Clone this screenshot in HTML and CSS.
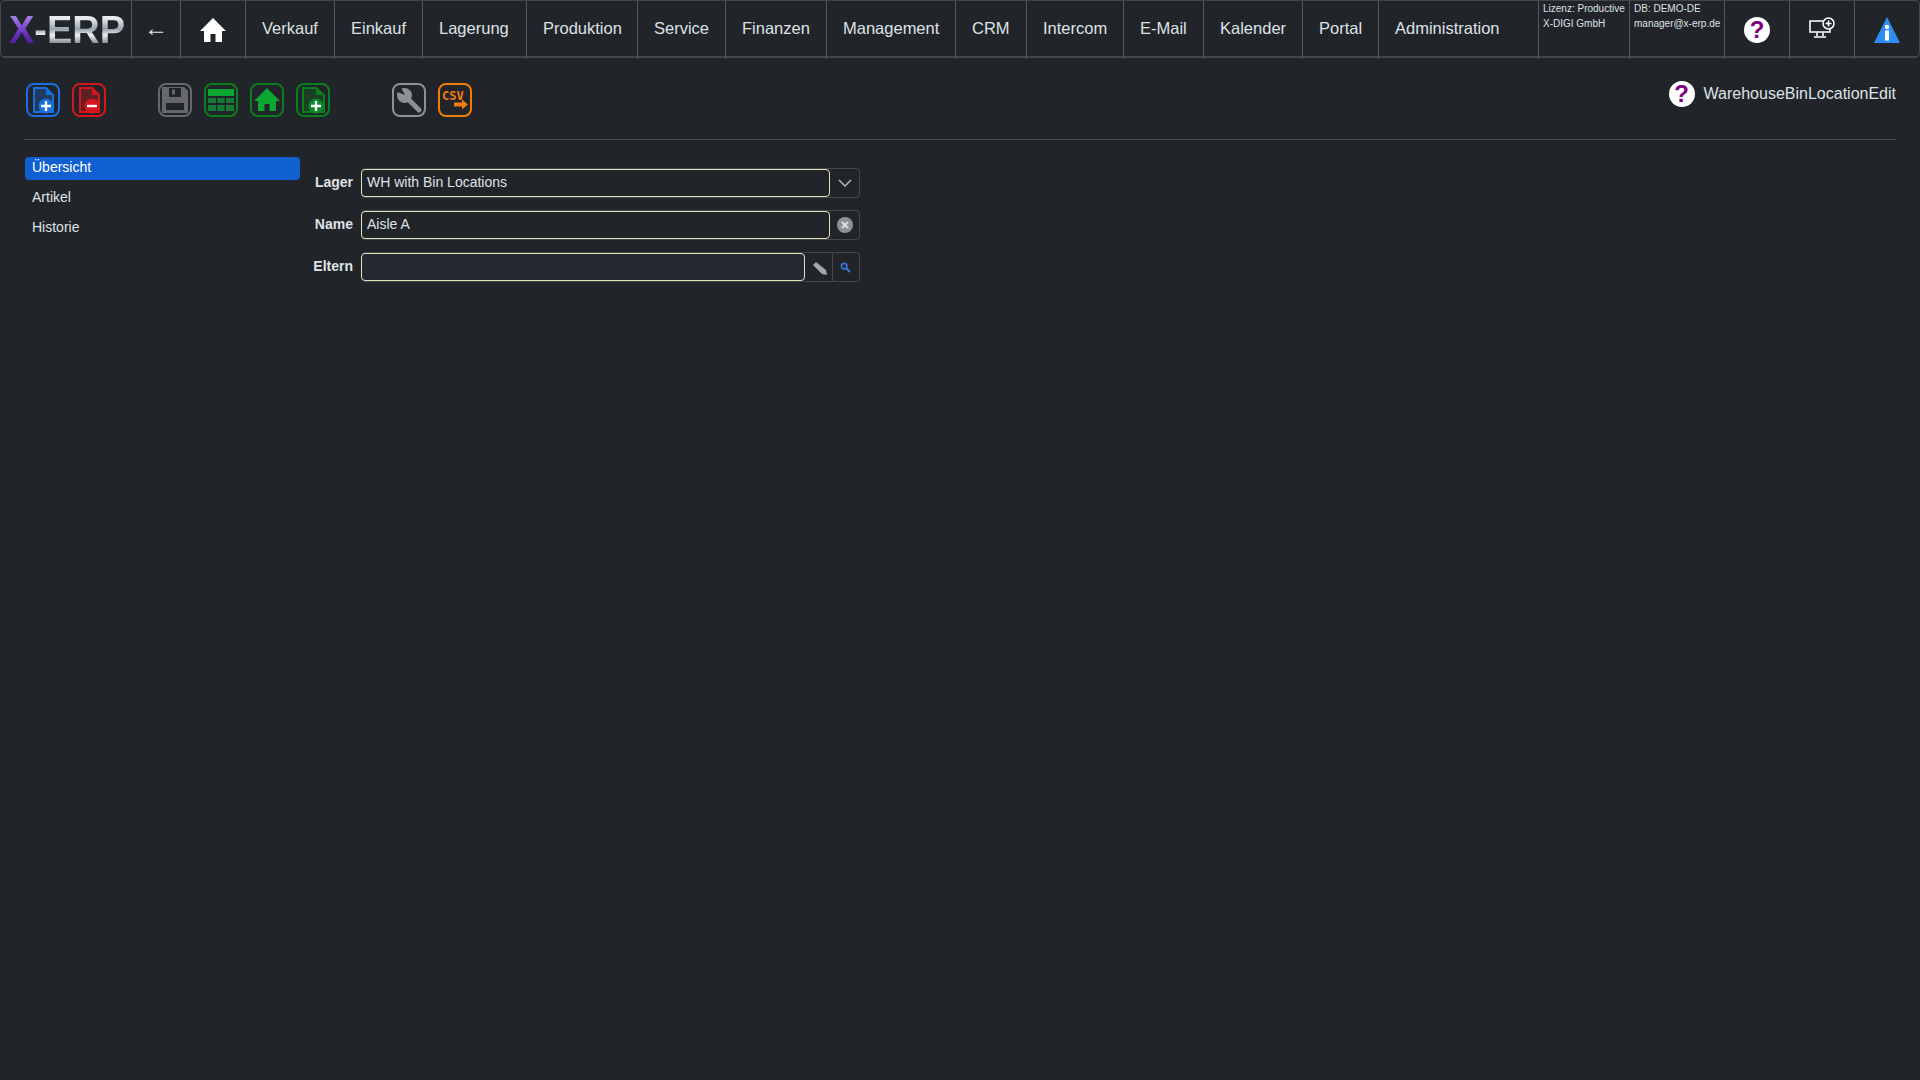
FILE: index.html
```html
<!DOCTYPE html>
<html lang="de">
<head>
<meta charset="utf-8">
<title>X-ERP</title>
<link rel="stylesheet" href="styles.css">
</head>
<body>
<header class="topbar">
  <div class="logo"><span class="logo-x">X</span><span class="logo-rest">-ERP</span></div>
  <div class="cell nav-item nav-arrow">←</div>
  <div class="cell icon-cell">
    <svg class="home-icon" viewBox="0 0 26 24"><path fill="#fff" d="M13 0 L26 13 H22 V24 H15.500 V16 H10.500 V24 H4 V13 H0 Z"/></svg>
  </div>
  <div class="cell nav-item">Verkauf</div>
  <div class="cell nav-item">Einkauf</div>
  <div class="cell nav-item">Lagerung</div>
  <div class="cell nav-item">Produktion</div>
  <div class="cell nav-item">Service</div>
  <div class="cell nav-item">Finanzen</div>
  <div class="cell nav-item">Management</div>
  <div class="cell nav-item">CRM</div>
  <div class="cell nav-item">Intercom</div>
  <div class="cell nav-item">E-Mail</div>
  <div class="cell nav-item">Kalender</div>
  <div class="cell nav-item">Portal</div>
  <div class="cell nav-item">Administration</div>
  <div class="cell info-cell"><div>Lizenz: Productive</div><div>X-DIGI GmbH</div></div>
  <div class="cell info-cell"><div>DB: DEMO-DE</div><div>manager@x-erp.de</div></div>
  <div class="cell icon-cell"><span class="help-badge">?</span></div>
  <div class="cell icon-cell">
    <svg class="monitor-icon" viewBox="0 0 26 22" fill="none" stroke="#fff">
      <path stroke-width="1.600" d="M14 4 H1 V15 H21 V11"/>
      <path stroke-width="1.600" d="M8 15.500 V19 M14 15.500 V19 M5 20 H17"/>
      <circle cx="19.500" cy="6.500" r="5.500" stroke-width="1.500" fill="#212529"/>
      <path stroke-width="1.600" d="M19.500 3.500 V9.500 M16.500 6.500 H22.500"/>
    </svg>
  </div>
  <div class="cell icon-cell">
    <svg class="info-icon" viewBox="0 0 26 26"><path fill="#2f8cf0" d="M13 0 L26 26 H0 Z"/><circle cx="13" cy="10" r="2.200" fill="#fff"/><rect x="11" y="13.500" width="4" height="10" fill="#fff"/></svg>
  </div>
</header>

<section class="toolbar">
  <div class="tool-group">
    <svg class="tool tool-blue" viewBox="0 0 34 34">
      <rect x="1" y="1" width="32" height="32" rx="7" fill="none" stroke="currentColor" stroke-width="2"/>
      <path fill="currentColor" fill-opacity=".3" stroke="currentColor" stroke-width="2" d="M8 5 H20 L27 12 V29 H8 Z"/>
      <path fill="currentColor" d="M20 4 L28 12 H20 Z"/>
      <circle cx="20" cy="23" r="7.500" fill="currentColor"/>
      <path stroke="#fff" stroke-width="2.400" d="M20 18 V28 M15 23 H25"/>
    </svg>
    <svg class="tool tool-red" viewBox="0 0 34 34">
      <rect x="1" y="1" width="32" height="32" rx="7" fill="none" stroke="currentColor" stroke-width="2"/>
      <path fill="currentColor" fill-opacity=".35" stroke="currentColor" stroke-width="2" d="M8 5 H20 L27 12 V29 H8 Z"/>
      <path fill="currentColor" d="M20 4 L28 12 H20 Z"/>
      <circle cx="20" cy="23" r="7.500" fill="currentColor"/>
      <path stroke="#fff" stroke-width="2.400" d="M15 23 H25"/>
    </svg>
  </div>
  <div class="tool-group tool-group-save">
    <svg class="tool tool-grey" viewBox="0 0 34 34">
      <rect x="1" y="1" width="32" height="32" rx="7" fill="none" stroke="currentColor" stroke-width="2"/>
      <path fill="currentColor" fill-rule="evenodd" d="M4 4 H26 L30 8 V30 H4 Z M11 5 V14 H23 V5 Z M8 19 V27 H26 V19 Z"/>
      <rect x="14" y="6.500" width="3" height="5" fill="currentColor"/>
      <rect x="8" y="18" width="18" height="2" fill="currentColor"/>
    </svg>
    <svg class="tool tool-green" viewBox="0 0 34 34">
      <rect x="1" y="1" width="32" height="32" rx="7" fill="none" stroke="currentColor" stroke-width="2"/>
      <rect x="4" y="6" width="26" height="7" fill="#0aa733"/>
      <g fill="#157a36">
        <rect x="4" y="15" width="8" height="5"/><rect x="13.500" y="15" width="7" height="5"/><rect x="22" y="15" width="8" height="5"/>
        <rect x="4" y="22" width="8" height="6"/><rect x="13.500" y="22" width="7" height="6"/><rect x="22" y="22" width="8" height="6"/>
      </g>
    </svg>
    <svg class="tool tool-green" viewBox="0 0 34 34">
      <rect x="1" y="1" width="32" height="32" rx="7" fill="none" stroke="currentColor" stroke-width="2"/>
      <path fill="#0aa733" d="M17 5 L30 18 H26 V28 H19.500 V21 H14.500 V28 H8 V18 H4 Z"/>
    </svg>
    <svg class="tool tool-green" viewBox="0 0 34 34">
      <rect x="1" y="1" width="32" height="32" rx="7" fill="none" stroke="currentColor" stroke-width="2"/>
      <path fill="currentColor" fill-opacity=".3" stroke="currentColor" stroke-width="2" d="M7 5 H20 L28 12 V29 H7 Z"/>
      <path fill="currentColor" d="M20 4 L28 12 H20 Z"/>
      <circle cx="20" cy="23" r="7.500" fill="#0a8a2a"/>
      <path stroke="#fff" stroke-width="2.400" d="M20 18 V28 M15 23 H25"/>
    </svg>
  </div>
  <div class="tool-group tool-group-extra">
    <svg class="tool tool-silver" viewBox="0 0 34 34">
      <rect x="1" y="1" width="32" height="32" rx="7" fill="none" stroke="currentColor" stroke-width="2"/>
      <circle cx="12.500" cy="12.500" r="7.500" fill="currentColor"/>
      <path stroke="currentColor" stroke-width="5" stroke-linecap="round" d="M14 14 L27 27"/>
      <path fill="#212529" d="M13 12 L8 3 L3 8 Z"/>
    </svg>
    <svg class="tool tool-orange" viewBox="0 0 34 34">
      <rect x="1" y="1" width="32" height="32" rx="7" fill="none" stroke="currentColor" stroke-width="2"/>
      <text class="csv-label" x="4" y="17">CSV</text>
      <path fill="currentColor" d="M16 19.500 H24 V16.500 L30 21.500 L24 26.500 V23.500 H16 Z"/>
    </svg>
  </div>
  <div class="page-title"><span class="help-badge">?</span><span>WarehouseBinLocationEdit</span></div>
</section>

<div class="divider"></div>

<main class="content">
  <nav class="side-menu">
    <div class="side-item side-item-active">Übersicht</div>
    <div class="side-item">Artikel</div>
    <div class="side-item">Historie</div>
  </nav>
  <form class="edit-form">
    <div class="form-row">
      <label class="form-label">Lager</label>
      <div class="field">
        <div class="field-input">WH with Bin Locations</div>
        <div class="addon addon-narrow">
          <svg class="chevron" viewBox="0 0 14 8" fill="none" stroke="#aeb2b6" stroke-width="1.600"><path d="M1 1 L7 7 L13 1"/></svg>
        </div>
      </div>
    </div>
    <div class="form-row">
      <label class="form-label">Name</label>
      <div class="field">
        <div class="field-input">Aisle A</div>
        <div class="addon addon-narrow">
          <svg class="clear-icon" viewBox="0 0 16 16"><circle cx="8" cy="8" r="8" fill="#8e9195"/><path stroke="#dcdcdc" stroke-width="2.200" d="M5 5 L11 11 M11 5 L5 11"/></svg>
        </div>
      </div>
    </div>
    <div class="form-row">
      <label class="form-label">Eltern</label>
      <div class="field">
        <div class="field-input field-input-empty"></div>
        <div class="addon addon-plain">
          <svg class="pencil-icon" viewBox="0 0 14 14"><path fill="#a3a6a9" d="M0 4 L3 1 L13 9 L14 14 L9 13 Z"/></svg>
        </div>
        <div class="addon addon-search">
          <svg class="search-icon" viewBox="0 0 12 12" fill="none" stroke="#3f72e0"><circle cx="4.500" cy="4.500" r="3" stroke-width="1.800"/><path stroke-width="2.400" d="M7 7 L11 11"/></svg>
        </div>
      </div>
    </div>
  </form>
</main>
</body>
</html>
```
FILE: styles.css
```css
* {
  box-sizing: border-box;
}

html,
body {
  height: 100%;
}

body {
  margin: 0;
  background: #212529;
  color: #dee2e6;
  font-family: "Liberation Sans", Arial, sans-serif;
  font-size: 14px;
}

.topbar {
  display: grid;
  grid-template-columns: 130px 49px 65px 89px 88px 104px 111px 88px 101px 129px 71px 97px 80px 99px 76px 160px 91px 95px 65px 65px 1fr;
  height: 58px;
  border: 1px solid #43474b;
  border-width: 1px 1px 2px 1px;
  border-radius: 5px;
}

.logo {
  padding-left: 8px;
  font-size: 38px;
  font-weight: 700;
  line-height: 58px;
  white-space: nowrap;
}

.logo-x {
  background: linear-gradient(180deg, #a27ae6 20%, #6a35c0 55%, #4f22a0 80%);
  -webkit-background-clip: text;
  background-clip: text;
  color: transparent;
}

.logo-rest {
  background: linear-gradient(180deg, #e8ecee 22%, #96a2aa 48%, #f0f2f4 62%, #8d959b 80%);
  -webkit-background-clip: text;
  background-clip: text;
  color: transparent;
}

.cell {
  display: flex;
  align-items: center;
  border-left: 1px solid #54585c;
}

.nav-item {
  padding: 0 0 4px 16px;
  font-size: 16.500px;
  white-space: nowrap;
}

.nav-arrow {
  font-size: 24px;
  padding: 0 0 5px 12px;
}

.icon-cell {
  justify-content: center;
}

.home-icon {
  width: 26px;
  height: 24px;
}

.info-cell {
  display: block;
  padding: 0 0 0 4px;
  font-size: 10px;
  line-height: 15px;
  white-space: nowrap;
}

.monitor-icon {
  width: 26px;
  height: 22px;
  margin-bottom: 5px;
}

.info-icon {
  width: 26px;
  height: 26px;
}

.help-badge {
  display: flex;
  align-items: center;
  justify-content: center;
  flex: none;
  width: 26px;
  height: 26px;
  border-radius: 50%;
  background: #fff;
  color: #800080;
  font-size: 24px;
  font-weight: 700;
}

.toolbar {
  display: flex;
  align-items: flex-start;
  padding: 25px 24px 0 26px;
  height: 81px;
}

.tool-group {
  display: flex;
  gap: 12px;
}

.tool-group-save {
  margin-left: 52px;
}

.tool-group-extra {
  margin-left: 62px;
}

.tool {
  display: block;
  width: 34px;
  height: 34px;
}

.tool-blue {
  color: #1a6fe0;
}

.tool-red {
  color: #d8151b;
}

.tool-grey {
  color: #66686b;
}

.tool-green {
  color: #0b7f1f;
}

.tool-silver {
  color: #8d9195;
}

.tool-orange {
  color: #f07c0c;
}

.csv-label {
  fill: currentColor;
  font-family: "DejaVu Sans Mono", monospace;
  font-size: 12px;
  font-weight: 700;
}

.page-title {
  display: flex;
  align-items: center;
  gap: 9px;
  margin-left: auto;
  margin-top: -2px;
  font-size: 16px;
}

.divider {
  height: 1px;
  margin: 0 24px;
  background: #4b4f53;
}

.content {
  display: flex;
  padding: 17px 0 0 25px;
}

.side-menu {
  width: 275px;
}

.side-item {
  height: 23px;
  margin-bottom: 7px;
  padding-left: 7px;
  line-height: 20px;
  border-radius: 4px;
}

.side-item-active {
  background: #1160d2;
  color: #fff;
}

.edit-form {
  margin-top: 11px;
}

.form-row {
  display: flex;
  align-items: center;
  height: 30px;
  margin-bottom: 12px;
}

.form-label {
  width: 53px;
  margin-right: 8px;
  padding-bottom: 2px;
  font-weight: 700;
  text-align: right;
}

.field {
  display: flex;
  width: 499px;
  height: 30px;
  border: 1px solid #43474b;
  border-left: 0;
  border-radius: 4px;
}

.field-input {
  flex: 1;
  height: 28px;
  border: 1px solid #e4e2b8;
  border-radius: 4px;
  padding-left: 5px;
  background: #212529;
  line-height: 24px;
  white-space: nowrap;
}

.addon {
  display: flex;
  align-items: center;
  justify-content: center;
  flex: none;
}

.addon-narrow {
  width: 29px;
}

.addon-plain {
  width: 28px;
  padding-left: 2px;
  border-right: 1px solid #43474b;
}

.addon-search {
  width: 26px;
  padding-right: 1px;
}

.field-input-empty {
  background: #252a30;
}

.chevron {
  width: 14px;
  height: 8px;
}

.clear-icon {
  width: 16px;
  height: 16px;
}

.pencil-icon {
  width: 14px;
  height: 14px;
  margin-top: 2px;
}

.search-icon {
  width: 11px;
  height: 11px;
}
```
